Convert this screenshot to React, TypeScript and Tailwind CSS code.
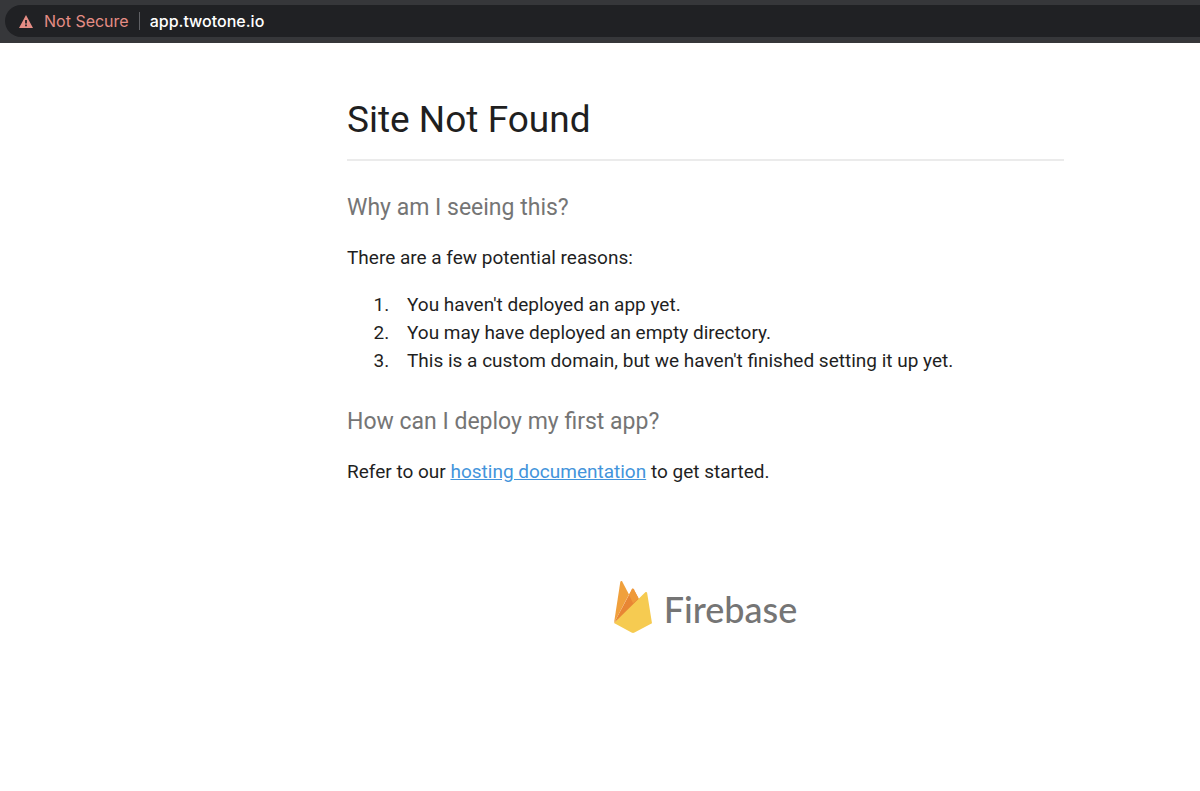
import React from 'react';

const reasons = [
  "You haven't deployed an app yet.",
  'You may have deployed an empty directory.',
  "This is a custom domain, but we haven't finished setting it up yet.",
];

const WarningIcon = () => (
  <svg viewBox="0 0 14 13" className="h-[13px] w-[14px] shrink-0" aria-hidden="true">
    <path
      fill="currentColor"
      fillRule="evenodd"
      d="M7 0 14 13H0ZM6.1 5v3.6h1.8V5ZM6.1 9.6v1.7h1.8V9.6Z"
    />
  </svg>
);

const FirebaseIcon = () => (
  <svg viewBox="0 0 38 52" className="h-[52px] w-[38px] shrink-0" aria-hidden="true">
    <path fill="#f0a03c" d="M0 42 6.3 1C6.5 0 7.6-.2 8.2.6L15 13.5Z" />
    <path fill="#e88634" d="M0 42 18 8.2Q18.8 7 19.7 8.2L26 20Z" />
    <path fill="#ef9a3a" d="M15 13.8 18 8.2Q18.8 7 19.7 8.2L24.5 17.2 19 22.2Z" />
    <path
      fill="#f6cb51"
      d="M0 42 31.3 11.3C32 10.6 32.9 10.9 33.1 11.8L38 42.2 20.5 51.6Q19 52.4 17.5 51.6Z"
    />
  </svg>
);

const App = () => {
  return (
    <div className="min-h-screen bg-white font-['Roboto',sans-serif] text-[#1f1f1f]">
      {/* Address bar */}
      <header className="bg-[#36373a] pt-[5px] pb-[6px] pl-[5px] font-['Inter',sans-serif] text-[16px]">
        <div className="flex h-8 items-center rounded-l-full bg-[#202124] pl-[14px]">
          <button type="button" className="flex items-center gap-[11px] text-[#e58d85]">
            <WarningIcon />
            <span>Not Secure</span>
          </button>
          <span className="mx-[10px] h-[18px] w-px bg-[#5f6064]" />
          <input
            type="text"
            aria-label="Address"
            defaultValue="app.twotone.io"
            className="min-w-0 flex-1 bg-transparent font-medium text-white outline-none"
          />
        </div>
      </header>

      {/* Content */}
      <main className="pt-[53px] pr-[136px] pl-[347px] text-[19px] leading-7">
        <h1 className="border-b-2 border-[#ebebeb] pb-[15px] text-[37px] leading-12">Site Not Found</h1>

        <h2 className="mt-[31px] text-[23px] leading-8 text-[#757575]">Why am I seeing this?</h2>
        <p className="mt-5">There are a few potential reasons:</p>
        <ol className="mt-[19px] list-decimal pl-[47px]">
          {reasons.map((reason) => (
            <li key={reason} className="pl-[13px]">
              {reason}
            </li>
          ))}
        </ol>

        <h2 className="mt-[31px] text-[23px] leading-8 text-[#757575]">How can I deploy my first app?</h2>
        <p className="mt-5">
          Refer to our{' '}
          <a href="#hosting" className="text-[#4394db] underline">
            hosting documentation
          </a>{' '}
          to get started.
        </p>

        {/* Logo */}
        <div className="mt-[95px] flex items-center justify-center gap-3 pb-8">
          <FirebaseIcon />
          <span className="pt-1 font-['Lato',sans-serif] text-[36px] leading-12 font-medium text-[#757575]">
            Firebase
          </span>
        </div>
      </main>
    </div>
  );
};

export default App;
